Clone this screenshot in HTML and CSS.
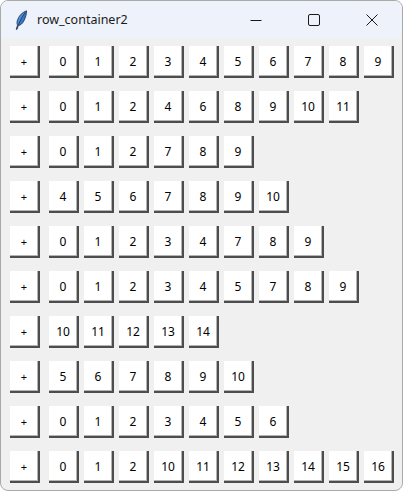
FILE: index.html
```html
<!DOCTYPE html>
<html>
<head>
<meta charset="utf-8">
<link rel="stylesheet" href="styles.css">
</head>
<body>
<div class="window">
  <div class="titlebar">
    <svg class="app-icon" width="14" height="20" viewBox="0 0 14 20">
      <defs>
        <linearGradient id="fg" x1="0" y1="0" x2="1" y2="1">
          <stop offset="0" stop-color="#9cc8f5"/>
          <stop offset="0.5" stop-color="#3a7fd4"/>
          <stop offset="1" stop-color="#16408a"/>
        </linearGradient>
      </defs>
      <path d="M12.5 0.8 C8 2.5 4.5 6 3.2 11 C2.8 12.8 3 14.2 3.6 15 L2.2 19.2 L3 19.4 L4.4 15.4 C6.6 15.4 8.6 13.4 10 10.6 C11.6 7.4 12.6 4 12.5 0.8 Z" fill="url(#fg)" stroke="#1d2e4a" stroke-width="0.8"/>
      <path d="M11.4 2.4 C8.6 6 6 10.4 4.4 15.2" fill="none" stroke="#10223d" stroke-width="0.7"/>
    </svg>
    <span class="title">row_container2</span>
    <div class="caption">
      <div class="cap-btn">
        <svg width="12" height="12" viewBox="0 0 12 12"><path d="M0.5 6.5 H11.5" stroke="#1a1a1a" stroke-width="1"/></svg>
      </div>
      <div class="cap-btn">
        <svg width="12" height="12" viewBox="0 0 12 12"><rect x="0.5" y="0.5" width="11" height="11" rx="1.5" fill="none" stroke="#1a1a1a" stroke-width="1"/></svg>
      </div>
      <div class="cap-btn">
        <svg width="12" height="12" viewBox="0 0 12 12"><path d="M0.5 0.5 L11.5 11.5 M11.5 0.5 L0.5 11.5" stroke="#1a1a1a" stroke-width="1"/></svg>
      </div>
    </div>
  </div>
  <div class="content">
    <div class="row"><span class="btn plus">+</span><span class="btn">0</span><span class="btn">1</span><span class="btn">2</span><span class="btn">3</span><span class="btn">4</span><span class="btn">5</span><span class="btn">6</span><span class="btn">7</span><span class="btn">8</span><span class="btn">9</span></div>
    <div class="row"><span class="btn plus">+</span><span class="btn">0</span><span class="btn">1</span><span class="btn">2</span><span class="btn">4</span><span class="btn">6</span><span class="btn">8</span><span class="btn">9</span><span class="btn">10</span><span class="btn">11</span></div>
    <div class="row"><span class="btn plus">+</span><span class="btn">0</span><span class="btn">1</span><span class="btn">2</span><span class="btn">7</span><span class="btn">8</span><span class="btn">9</span></div>
    <div class="row"><span class="btn plus">+</span><span class="btn">4</span><span class="btn">5</span><span class="btn">6</span><span class="btn">7</span><span class="btn">8</span><span class="btn">9</span><span class="btn">10</span></div>
    <div class="row"><span class="btn plus">+</span><span class="btn">0</span><span class="btn">1</span><span class="btn">2</span><span class="btn">3</span><span class="btn">4</span><span class="btn">7</span><span class="btn">8</span><span class="btn">9</span></div>
    <div class="row"><span class="btn plus">+</span><span class="btn">0</span><span class="btn">1</span><span class="btn">2</span><span class="btn">3</span><span class="btn">4</span><span class="btn">5</span><span class="btn">7</span><span class="btn">8</span><span class="btn">9</span></div>
    <div class="row"><span class="btn plus">+</span><span class="btn">10</span><span class="btn">11</span><span class="btn">12</span><span class="btn">13</span><span class="btn">14</span></div>
    <div class="row"><span class="btn plus">+</span><span class="btn">5</span><span class="btn">6</span><span class="btn">7</span><span class="btn">8</span><span class="btn">9</span><span class="btn">10</span></div>
    <div class="row"><span class="btn plus">+</span><span class="btn">0</span><span class="btn">1</span><span class="btn">2</span><span class="btn">3</span><span class="btn">4</span><span class="btn">5</span><span class="btn">6</span></div>
    <div class="row"><span class="btn plus">+</span><span class="btn">0</span><span class="btn">1</span><span class="btn">2</span><span class="btn">10</span><span class="btn">11</span><span class="btn">12</span><span class="btn">13</span><span class="btn">14</span><span class="btn">15</span><span class="btn">16</span></div>
  </div>
</div>
</body>
</html>
```

FILE: styles.css
```css
html, body {
  margin: 0;
  padding: 0;
  background: #ffffff;
}

.window {
  box-sizing: border-box;
  width: 403px;
  height: 491px;
  border: 1px solid #a9a9a9;
  border-radius: 8px;
  overflow: hidden;
  background: #f0f0f0;
  font-family: "Noto Sans", "Open Sans", sans-serif;
}

.titlebar {
  height: 37px;
  background: #eef2fa;
  display: flex;
  align-items: center;
}

.app-icon {
  margin-left: 13px;
  margin-top: 1px;
  flex: none;
}

.title {
  margin-left: 9px;
  font-size: 12.5px;
  color: #1a1a1a;
}

.caption {
  margin-left: auto;
  display: flex;
  height: 100%;
  margin-right: 1px;
}

.cap-btn {
  width: 58px;
  height: 100%;
  display: flex;
  align-items: center;
  justify-content: center;
}

.content {
  padding: 8px 0 0 9px;
}

.row {
  display: flex;
  gap: 5px;
  margin-bottom: 13px;
}

.btn {
  box-sizing: border-box;
  width: 30px;
  height: 32px;
  display: flex;
  align-items: center;
  justify-content: center;
  background: #ffffff;
  box-shadow: inset -2px -2px 0 #4d4d4d, inset -3px -3px 0 #b4b4b4;
  font-size: 12px;
  color: #000;
  padding: 0 2px 2px 0;
}

.btn.plus {
  margin-right: 4px;
  font-size: 11px;
}
```
